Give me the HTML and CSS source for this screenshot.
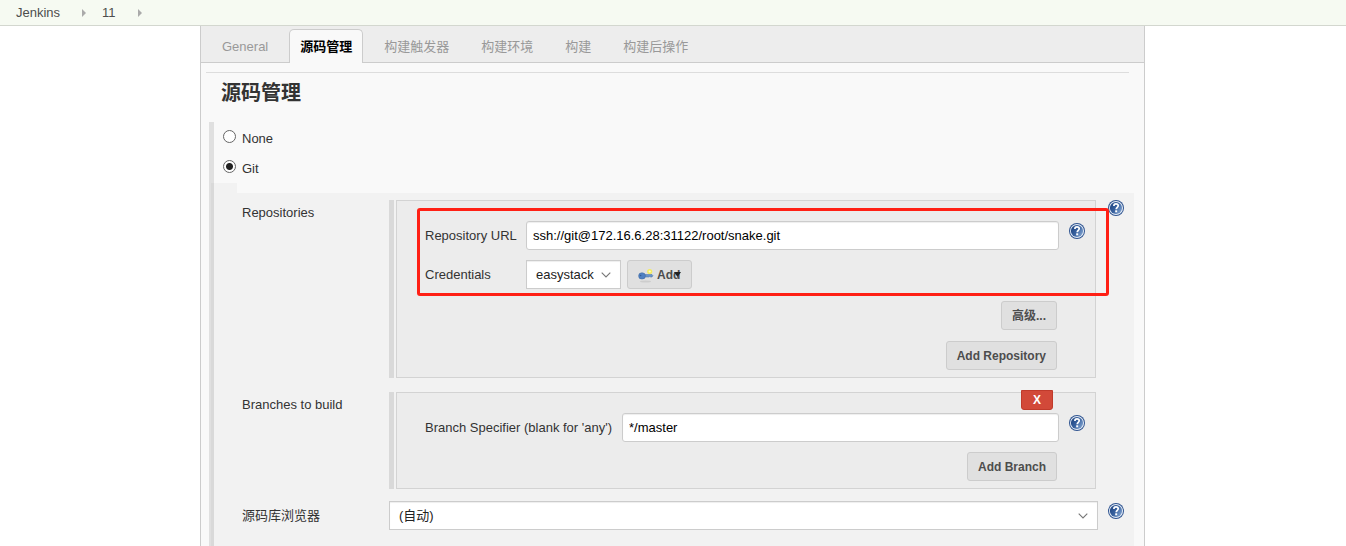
FILE: index.html
```html
<!DOCTYPE html>
<html lang="zh-CN">
<head>
<meta charset="utf-8">
<title>11 Config [Jenkins]</title>
<link rel="stylesheet" href="styles.css">
</head>
<body>
<svg class="defs" aria-hidden="true">
  <defs>
    <linearGradient id="help-fill" x1="0" y1="0.2" x2="1" y2="0.8">
      <stop offset="0" stop-color="#1f4582"/>
      <stop offset="0.5" stop-color="#3a63a0"/>
      <stop offset="1" stop-color="#86a8d4"/>
    </linearGradient>
    <symbol id="help" viewBox="0 0 16 16">
      <circle cx="8" cy="8" r="8" fill="#2f5490"/>
      <circle cx="8" cy="8" r="7" fill="#e9eff7"/>
      <circle cx="8" cy="8" r="6.100" fill="url(#help-fill)"/>
      <path d="M5.900 5.900C5.900 4.300 6.800 3.800 8 3.800s2.200.6 2.200 1.900c0 1.500-2 1.700-2 3.500" fill="none" stroke="#fff" stroke-width="1.700"/>
      <rect x="7.200" y="10.300" width="2" height="2" fill="#fff"/>
    </symbol>
    <symbol id="chevron" viewBox="0 0 10 6">
      <path d="M0.700 0.700L5 5l4.300-4.300" fill="none" stroke="currentColor" stroke-width="1.100"/>
    </symbol>
  </defs>
</svg>

<nav class="breadcrumbs">
  <a href="#">Jenkins</a><span class="crumb-arrow"></span>
  <a href="#">11</a><span class="crumb-arrow"></span>
</nav>

<main class="panel">
  <nav class="tabs">
    <a class="tab" href="#">General</a>
    <a class="tab active" href="#">源码管理</a>
    <a class="tab" href="#">构建触发器</a>
    <a class="tab" href="#">构建环境</a>
    <a class="tab" href="#">构建</a>
    <a class="tab" href="#">构建后操作</a>
  </nav>

  <form class="section">
    <h2 class="section-title">源码管理</h2>

    <div class="scm">
      <label class="choice"><input type="radio" name="scm"><span>None</span></label>
      <label class="choice"><input type="radio" name="scm" checked><span>Git</span></label>

      <div class="config">
        <div class="config-body">
          <div class="row">
            <div class="row-label">Repositories</div>
            <div class="chunk">
              <div class="box">
                <div class="field">
                  <label class="field-label" for="url">Repository URL</label>
                  <input class="text" id="url" type="text" value="ssh://git@172.16.6.28:31122/root/snake.git">
                  <button class="help" type="button" aria-label="Help"><svg><use href="#help"/></svg></button>
                </div>
                <div class="field">
                  <label class="field-label" for="cred">Credentials</label>
                  <div class="inline">
                    <div class="select-wrap">
                      <select class="select compact" id="cred"><option>easystack</option></select>
                      <svg class="chevron"><use href="#chevron"/></svg>
                    </div>
                    <button class="btn add" type="button">
                      <svg class="key" viewBox="0 0 16 16">
                        <ellipse cx="7.500" cy="14.500" rx="5.500" ry="1" fill="#cdcdcd"/>
                        <circle cx="11.700" cy="4.500" r="2.600" fill="#f3ea62"/>
                        <circle cx="11.700" cy="4.500" r="1.100" fill="#fffbc4"/>
                        <path d="M6 7.600h8l.9 1-.9 1.400h-1.300l-.9-.5-.9.5H6z" fill="#6c97cc" stroke="#42699d" stroke-width=".5"/>
                        <ellipse cx="4" cy="8.900" rx="3.400" ry="3.200" fill="#4f80c2" stroke="#42699d" stroke-width=".5"/>
                        <circle cx="2.600" cy="8.500" r=".8" fill="#345b92"/>
                      </svg>
                      <span>Add</span>
                      <svg class="caret" viewBox="0 0 7 5"><path d="M0 0h7L3.500 5z" fill="#222"/></svg>
                    </button>
                  </div>
                </div>
                <div class="actions"><button class="btn" type="button">高级...</button></div>
                <div class="actions"><button class="btn" type="button">Add Repository</button></div>
                <div class="highlight"></div>
              </div>
            </div>
            <button class="help" type="button" aria-label="Help"><svg><use href="#help"/></svg></button>
          </div>

          <div class="row">
            <div class="row-label">Branches to build</div>
            <div class="chunk">
              <div class="box">
                <button class="delete" type="button">X</button>
                <div class="field auto">
                  <label class="field-label" for="branch">Branch Specifier (blank for 'any')</label>
                  <input class="text" id="branch" type="text" value="*/master">
                  <button class="help" type="button" aria-label="Help"><svg><use href="#help"/></svg></button>
                </div>
                <div class="actions"><button class="btn" type="button">Add Branch</button></div>
              </div>
            </div>
          </div>

          <div class="row browser">
            <label class="row-label" for="browser">源码库浏览器</label>
            <div class="select-wrap">
              <select class="select" id="browser"><option>(自动)</option></select>
              <svg class="chevron"><use href="#chevron"/></svg>
            </div>
            <button class="help" type="button" aria-label="Help"><svg><use href="#help"/></svg></button>
          </div>
        </div>
      </div>
    </div>
  </form>
</main>
</body>
</html>
```
FILE: styles.css
```css
* {
  box-sizing: border-box;
}

html {
  height: 100%;
}

body {
  display: flex;
  flex-direction: column;
  min-height: 100%;
  margin: 0;
  background: #fff;
  color: #333;
  font: 13px/20px "Liberation Sans", "Noto Sans CJK SC", sans-serif;
}

button,
input,
select {
  margin: 0;
  font: inherit;
}

a {
  color: inherit;
  text-decoration: none;
}

.defs {
  position: absolute;
  width: 0;
  height: 0;
}

.breadcrumbs {
  display: flex;
  align-items: center;
  height: 26px;
  padding: 1px 0 0 16px;
  border-bottom: 1px solid #d3d7cf;
  background: #f6faf2;
  color: #4d4d4d;
}

.crumb-arrow {
  margin: 0 16px 0 22px;
  border: 4px solid transparent;
  border-right-width: 0;
  border-left-color: #aaa;
}

.panel {
  flex: 1;
  margin: 0 201px 0 200px;
  border: solid #ccc;
  border-width: 0 1px;
  background: #f9f9f9;
}

.tabs {
  display: flex;
  gap: 10px;
  height: 37px;
  padding: 3px 10px 0;
  border-bottom: 1px solid #ccc;
  background: #ededed;
}

.tab {
  height: 34px;
  padding: 0 10px;
  border: 1px solid transparent;
  border-bottom: 0;
  border-radius: 5px 5px 0 0;
  color: #999;
  line-height: 33px;
}

.tab.active {
  border-color: #ccc;
  background: #f9f9f9;
  color: #000;
  font-weight: bold;
}

.section {
  padding: 9px 10px 0 5px;
}

.section-title {
  margin: 0 5px 0 0;
  padding: 6px 0 14px 15px;
  border-top: 1px solid #ddd;
  font-size: 20px;
  line-height: 29px;
}

.scm {
  margin-left: 3px;
  border-left: 5px solid #e0e0e0;
}

.choice {
  display: flex;
  gap: 6px;
  height: 30px;
  padding: 6px 0 0 9px;
}

.choice span {
  line-height: 21px;
}

.choice input {
  appearance: none;
  flex: none;
  width: 13px;
  height: 13px;
  margin-top: 2px;
  border: 1px solid #666;
  border-radius: 50%;
  background: #fff;
}

.choice input:checked {
  background: radial-gradient(circle, #222 3px, #fff 4px);
}

.config {
  margin: 1px 0 0 -3px;
  padding-left: 23px;
  border-left: 3px solid #d9d9d9;
  background: linear-gradient(#f2f2f2, #f2f2f2) left / 23px 100% no-repeat;
}

.config-body {
  display: grid;
  padding: 7px 0 40px 5px;
  border-top: 10px solid #f9f9f9;
  background: #f2f2f2;
}

.row {
  display: grid;
  grid-template-columns: 147px 1fr 36px;
  align-items: start;
  margin-bottom: 14px;
}

.row-label {
  line-height: 26px;
}

.row > .help {
  margin-left: 10px;
}

.browser {
  margin-top: -2px;
}

.browser .row-label {
  line-height: 30px;
}

.browser > .help {
  margin-top: 2px;
}

.chunk {
  margin-right: 2px;
  padding-left: 2px;
  border-left: 5px solid #d9d9d9;
}

.box {
  position: relative;
  padding: 20px 10px 7px 28px;
  border: 1px solid #d3d3d3;
  background: #ececec;
}

.field {
  display: grid;
  grid-template-columns: 101px 1fr 16px;
  align-items: start;
  margin-bottom: 10px;
}

.field.auto {
  grid-template-columns: auto 1fr 16px;
}

.field.auto .field-label {
  padding-right: 10px;
}

.field-label {
  line-height: 29px;
}

.field .text {
  width: auto;
  min-width: 0;
  margin-right: 10px;
}

.field .help {
  margin-top: 2px;
}

.text {
  height: 29px;
  padding: 0 6px;
  border: 1px solid #ccc;
  border-radius: 3px;
  background: #fff;
  box-shadow: inset 0 1px 1px #eee;
  color: #000;
}

.inline {
  display: flex;
  gap: 6px;
}

.select-wrap {
  position: relative;
}

.select {
  appearance: none;
  display: block;
  width: 100%;
  height: 29px;
  padding: 0 30px 0 9px;
  border: 1px solid #ccc;
  border-radius: 0;
  background: #fff;
  box-shadow: inset 0 1px 1px #eee;
  color: #222;
}

.chevron {
  position: absolute;
  top: 12px;
  right: 10px;
  width: 10px;
  height: 6px;
  color: #777;
  pointer-events: none;
}

.select.compact {
  padding-right: 26px;
}

.btn {
  height: 29px;
  padding: 0 10px;
  border: 1px solid #ccc;
  border-radius: 3px;
  background: #e0e0e0;
  color: #4d4d4d;
  font-size: 12px;
  font-weight: bold;
}

.add {
  position: relative;
  display: flex;
  align-items: center;
  gap: 3px;
  padding-right: 11px;
}

.key {
  width: 16px;
  height: 16px;
}

.caret {
  position: absolute;
  top: 11px;
  right: 10px;
  width: 7px;
  height: 5px;
}

.actions {
  display: flex;
  justify-content: flex-end;
  padding-right: 28px;
}

.actions + .actions {
  margin-top: 11px;
}

.field:not(.auto) + .actions {
  margin-top: 12px;
}

.help {
  display: block;
  width: 16px;
  height: 16px;
  padding: 0;
  border: 0;
  background: none;
}

.help svg {
  display: block;
  width: 16px;
  height: 16px;
}

.delete {
  position: absolute;
  top: -3px;
  right: 42px;
  width: 32px;
  height: 20px;
  padding: 0;
  border: 1px solid #c03a2b;
  border-radius: 0 0 3px 3px;
  background: #d24939;
  color: #fff;
  font-size: 12px;
  font-weight: bold;
  line-height: 18px;
}

.highlight {
  position: absolute;
  top: 7px;
  right: -14px;
  left: 20px;
  height: 88px;
  border: 3px solid #ff2015;
  border-radius: 3px;
  pointer-events: none;
}
```
